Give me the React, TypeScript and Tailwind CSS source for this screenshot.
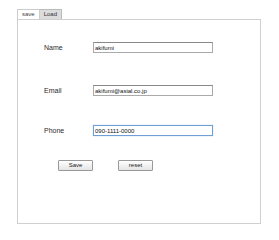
import React from "react";

const font = { fontFamily: '"Liberation Sans", Arial, sans-serif' };

const Field = ({ label, value, focused }: { label: string; value: string; focused?: boolean }) => (
  <div className="flex h-[11px] items-center">
    <div className="w-[49px] text-[7px] leading-[8px] text-[#2a2a2a]">{label}</div>
    <input
      readOnly
      value={value}
      className={`h-[11px] w-[120px] px-[1px] text-[6px] leading-[9px] text-[#111] outline-none ${
        focused
          ? "border border-[#6f9fd6] shadow-[0_0_1px_#9cc2ec]"
          : "border border-[#aaa] border-t-[#888]"
      }`}
      style={font}
    />
  </div>
);

export default function App() {
  return (
    <div className="h-[240px] w-[279px] bg-white" style={font}>
      <div className="flex pl-[17px] pt-[9px]">
        <div className="flex h-[10px] items-center border border-b-0 border-[#ccc] bg-white px-[4px] text-[6px] text-[#444]">
          save
        </div>
        <div className="flex h-[10px] items-center border border-b-0 border-l-0 border-[#bbb] bg-[#dcdcdc] px-[4px] text-[6px] text-[#333]">
          Load
        </div>
      </div>
      <div className="ml-[17px] h-[205px] w-[244px] border border-[#d0d0d0] pl-[26px] pt-[22px]">
        <Field label="Name" value="akifumi" />
        <div className="mt-[32px]">
          <Field label="Email" value="akifumi@asial.co.jp" />
        </div>
        <div className="mt-[29px]">
          <Field label="Phone" value="090-1111-0000" focused />
        </div>
        <div className="mt-[24px] flex pl-[14px]">
          <button className="h-[11px] w-[35px] rounded-[1px] border border-[#999] bg-gradient-to-b from-white to-[#e4e4e4] text-[6px] leading-[9px] text-[#222]">
            Save
          </button>
          <button className="ml-[25px] h-[11px] w-[35px] rounded-[1px] border border-[#999] bg-gradient-to-b from-white to-[#e4e4e4] text-[6px] leading-[9px] text-[#222]">
            reset
          </button>
        </div>
      </div>
    </div>
  );
}
